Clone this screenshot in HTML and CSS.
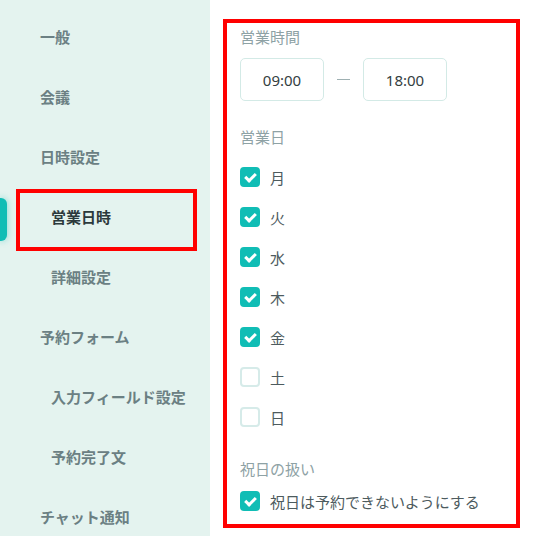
FILE: index.html
```html
<!DOCTYPE html>
<html lang="ja">
<head>
    <meta charset="UTF-8">
    <meta name="viewport" content="width=device-width, initial-scale=1.0">
    <title>営業日時</title>
    <link rel="stylesheet" href="styles.css">
</head>
<body>
    <div class="layout">
        <nav class="sidebar">
            <a class="nav-item">一般</a>
            <a class="nav-item">会議</a>
            <a class="nav-item">日時設定</a>
            <a class="nav-item sub active">営業日時</a>
            <a class="nav-item sub">詳細設定</a>
            <a class="nav-item">予約フォーム</a>
            <a class="nav-item sub">入力フィールド設定</a>
            <a class="nav-item sub">予約完了文</a>
            <a class="nav-item">チャット通知</a>
        </nav>

        <main class="content">
            <section class="panel">
                <div class="field-label">営業時間</div>
                <div class="time-range">
                    <div class="time-box">09:00</div>
                    <span class="dash"></span>
                    <div class="time-box">18:00</div>
                </div>

                <div class="field-label days-label">営業日</div>
                <div class="check-list">
                    <label class="check-row"><span class="check on"></span>月</label>
                    <label class="check-row"><span class="check on"></span>火</label>
                    <label class="check-row"><span class="check on"></span>水</label>
                    <label class="check-row"><span class="check on"></span>木</label>
                    <label class="check-row"><span class="check on"></span>金</label>
                    <label class="check-row"><span class="check"></span>土</label>
                    <label class="check-row"><span class="check"></span>日</label>
                </div>

                <div class="field-label holiday-label">祝日の扱い</div>
                <label class="check-row last"><span class="check on"></span>祝日は予約できないようにする</label>
            </section>
        </main>
    </div>
</body>
</html>
```
FILE: styles.css
```css
body {
    margin: 0;
    font-family: "Noto Sans", "Noto Sans CJK JP", sans-serif;
    font-size: 15px;
    background: #fff;
}
.layout {
    display: flex;
    height: 536px;
    overflow: hidden;
}

/* サイドメニュー */
.sidebar {
    width: 210px;
    flex-shrink: 0;
    background: #e4f3ef;
    padding-top: 6px;
    display: flex;
    flex-direction: column;
}
.nav-item {
    position: relative;
    height: 60px;
    display: flex;
    align-items: center;
    padding-left: 40px;
    font-weight: bold;
    color: #6b8083;
    flex-shrink: 0;
}
.nav-item.sub {
    padding-left: 51px;
}
.nav-item.active {
    color: #2c3a3c;
}
.nav-item.active::before {
    content: "";
    position: absolute;
    left: 0;
    top: 12px;
    width: 7px;
    height: 43px;
    background: #0fbdb5;
    border-radius: 0 6px 6px 0;
    box-shadow: 0 0 6px rgba(15, 189, 181, 0.5);
}
.nav-item.active::after {
    content: "";
    position: absolute;
    left: 16px;
    top: 3px;
    width: 181px;
    height: 62px;
    border: 4px solid #ff0000;
    box-sizing: border-box;
}

/* 設定パネル */
.content {
    flex: 1;
}
.panel {
    width: 297px;
    height: 509px;
    margin: 19px 0 0 13px;
    padding: 3px 13px 0;
    border: 4px solid #ff0000;
    box-sizing: border-box;
}
.field-label {
    line-height: 22px;
    color: #8ea2a5;
}
.time-range {
    display: flex;
    align-items: center;
    margin-top: 10px;
}
.time-box {
    width: 84px;
    height: 43px;
    box-sizing: border-box;
    border: 1px solid #d3eae6;
    border-radius: 5px;
    display: flex;
    align-items: center;
    justify-content: center;
    color: #34403f;
}
.dash {
    width: 13px;
    height: 1px;
    margin: 0 13px;
    background: #9eb0b2;
}
.days-label {
    margin-top: 25px;
}
.check-list {
    margin-top: 9px;
}
.check-row {
    height: 40px;
    display: flex;
    align-items: center;
    gap: 10px;
    color: #4d5b5e;
}
.check-row.last {
    height: 32px;
    margin-top: 5px;
}
.holiday-label {
    margin-top: 21px;
}
.check {
    width: 20px;
    height: 20px;
    box-sizing: border-box;
    border: 2px solid #d6ebe9;
    border-radius: 4px;
    background: #fff;
    position: relative;
}
.check.on {
    border-color: #10bdb5;
    background: #10bdb5;
}
.check.on::after {
    content: "";
    position: absolute;
    left: 5px;
    top: 2px;
    width: 4px;
    height: 8px;
    border: solid #fff;
    border-width: 0 3px 3px 0;
    transform: rotate(45deg);
}
```
